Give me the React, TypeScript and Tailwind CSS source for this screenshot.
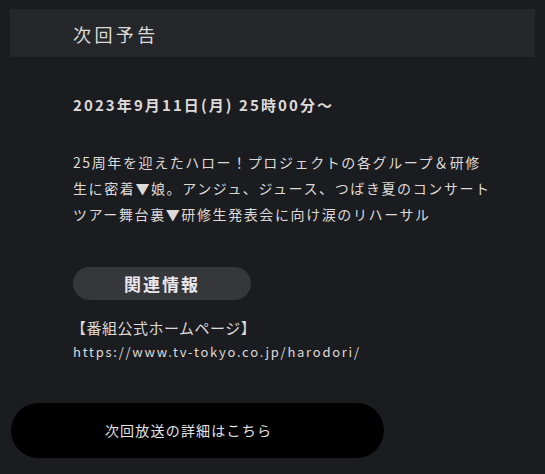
export default function App() {
  return (
    <div
      className="w-[545px] h-[474px] overflow-hidden bg-[#1b1c1f] text-[#dedad9]"
      style={{ fontFamily: '"Noto Sans CJK JP", "Noto Sans", sans-serif' }}
    >
      <div className="ml-[10px] mr-[10px] mt-[9px] h-[48px] bg-[#25272a] pl-[63px] flex items-center">
        <h2 className="text-[18px] leading-none tracking-[3.4px] pt-[1px]">次回予告</h2>
      </div>

      <div className="pl-[73px]">
        <p className="mt-[38px] text-[15px] leading-[20px] font-bold tracking-[2.1px]">
          2023年9月11日(月) 25時00分〜
        </p>

        <p className="mt-[34px] text-[14px] leading-[26px] tracking-[1.6px]">
          25周年を迎えたハロー！プロジェクトの各グループ＆研修
          <br />
          生に密着▼娘。アンジュ、ジュース、つばき夏のコンサート
          <br />
          ツアー舞台裏▼研修生発表会に向け涙のリハーサル
        </p>

        <div className="mt-[40px] w-[178px] h-[33px] rounded-full bg-[#35373b] flex items-center justify-center">
          <span className="text-[17px] font-bold tracking-[2px] text-[#ece8ee]">関連情報</span>
        </div>

        <p className="mt-[16px] -ml-[2px] text-[15px] leading-[24px] tracking-[0.5px]">
          【番組公式ホームページ】
        </p>
        <p className="text-[13px] leading-[24px] tracking-[1.75px]">
          https://www.tv-tokyo.co.jp/harodori/
        </p>
      </div>

      <a
        href="#"
        className="mt-[39px] ml-[11px] w-[373px] h-[55px] rounded-full bg-black flex items-center justify-center text-[14px] tracking-[1.2px] text-[#e6e3e3] pr-[18px]"
      >
        次回放送の詳細はこちら
      </a>
    </div>
  );
}
